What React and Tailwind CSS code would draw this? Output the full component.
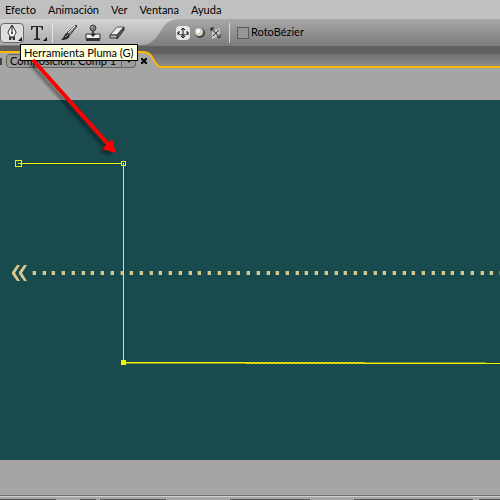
const MENU_ITEMS = ["Efecto", "Animación", "Ver", "Ventana", "Ayuda"];

// widths and gaps of the timeline header cells peeking in at the bottom
const TIMELINE_CELLS = [
  { x: 0, w: 56 },
  { x: 80, w: 16 },
  { x: 100, w: 66 },
  { x: 230, w: 80 },
  { x: 354, w: 119 },
  { x: 479, w: 2000 },
];

function MenuBar() {
  return (
    <nav className="flex h-[19px] items-center gap-3 bg-[#c0c0c0] px-[5px]">
      {MENU_ITEMS.map((item) => (
        <button key={item} type="button" className="leading-4">
          {item}
        </button>
      ))}
    </nav>
  );
}

function ToolButton({ label, active, children }) {
  return (
    <button
      type="button"
      aria-label={label}
      className={
        active
          ? "flex h-5 w-6 items-center justify-center rounded border border-[#6a6a6a] bg-[#dedede]"
          : "flex h-5 w-6 items-center justify-center"
      }
    >
      {children}
    </button>
  );
}

function PenIcon() {
  return (
    <svg width="22" height="18" viewBox="0 0 22 18">
      <path
        d="M11 1 L7 8 C7 10 9 11 9 13 H13 C13 11 15 10 15 8 Z"
        fill="#fff"
        stroke="#222"
      />
      <path d="M11 2 V8" stroke="#111" />
      <circle cx="11" cy="9" r="1" fill="#111" />
      <path d="M8 13 H14 V16 H8 Z" fill="#333" />
      <path d="M10 14 H12 V16 H10 Z" fill="#aaa" />
      <path d="M21 13 V17 H17 Z" fill="#111" />
    </svg>
  );
}

function TypeIcon() {
  return (
    <svg width="20" height="18" viewBox="0 0 20 18">
      <path
        d="M4 2 H16 V6 H15 L14 3 H11 V14 L13 15 V16 H7 V15 L9 14 V3 H6 L5 6 H4 Z"
        fill="#2a2a2a"
      />
      <path d="M20 13 V17 H16 Z" fill="#111" />
    </svg>
  );
}

function BrushIcon() {
  return (
    <svg width="18" height="18" viewBox="0 0 18 18">
      <path d="M16 1 L17 2 L10 11 L7 9 Z" fill="#8a8a8a" stroke="#333" />
      <path d="M15 2 L8 9" stroke="#eee" />
      <path d="M7 9 L10 12 C8 15 6 16 1 16 C4 14 4 10 7 9 Z" fill="#222" />
      <path d="M5 13 L8 11" stroke="#aaa" />
    </svg>
  );
}

function StampIcon() {
  return (
    <svg width="18" height="18" viewBox="0 0 18 18">
      <circle cx="9" cy="4" r="3" fill="#777" stroke="#444" />
      <path d="M8 7 H10 V11 H8 Z" fill="#444" />
      <path d="M2 10 H16 V15 H2 Z" fill="#eee" stroke="#333" />
      <path d="M6 10 H12 L9 13 Z" fill="#333" />
      <path d="M2 14 H16 V17 H2 Z" fill="#333" />
      <path d="M7 3 H9" stroke="#ccc" />
    </svg>
  );
}

function EraserIcon() {
  return (
    <svg width="18" height="18" viewBox="0 0 18 18">
      <path d="M9 3 H16 L9 11 H2 Z" fill="#eee" stroke="#555" />
      <path d="M9 11 L16 3 V6 L9 15 Z" fill="#555" stroke="#333" />
      <path d="M2 11 H9 V14 H2 Z" fill="#bbb" stroke="#333" />
    </svg>
  );
}

function AnchorIcon() {
  return (
    <svg width="12" height="12" viewBox="0 0 12 12" fill="none" stroke="#111">
      <path d="M6 1 V11 M1 6 C3 8 4 8 6 8 C8 8 9 8 11 6" />
      <path d="M4 3 L6 1 L8 3 M1 8 V5 H3 M11 8 V5 H9 M4 9 L6 11 L8 9" />
    </svg>
  );
}

function SphereIcon() {
  return (
    <svg width="12" height="12" viewBox="0 0 12 12">
      <circle cx="6" cy="6" r="5" fill="#444" />
      <circle cx="5" cy="5" r="4" fill="#d6d6c8" />
      <circle cx="4" cy="4" r="2" fill="#fff" />
    </svg>
  );
}

function AxisIcon() {
  return (
    <svg width="12" height="12" viewBox="0 0 12 12">
      <path d="M2 4 L10 1 V9 L2 12 Z" fill="#c4c4c4" />
      <path d="M1 1 L10 11 M1 4 V1 H4" fill="none" stroke="#111" />
      <path d="M3 9 L9 3 M7 10 H10 V7" fill="none" stroke="#333" />
    </svg>
  );
}

function Toolbar() {
  return (
    <div className="relative h-[27px] bg-linear-to-b from-[#a8a8a8] to-[#7c7c7c]">
      {/* light plate behind the main tools */}
      <svg className="absolute left-0 top-0" width="180" height="27">
        <defs>
          <linearGradient id="plate" x1="0" y1="0" x2="0" y2="1">
            <stop offset="0" stopColor="#d4d4d4" />
            <stop offset="1" stopColor="#a8a8a8" />
          </linearGradient>
        </defs>
        <path
          d="M0 0 H178 C164 1 164 9 158 16 C153 23 148 26 140 26 H0 Z"
          fill="url(#plate)"
        />
      </svg>
      <div className="relative flex h-[27px] items-center">
        <div className="flex items-center gap-px">
          <ToolButton label="Herramienta Pluma" active>
            <PenIcon />
          </ToolButton>
          <ToolButton label="Texto">
            <TypeIcon />
          </ToolButton>
        </div>
        <div className="ml-[3px] h-5 w-px bg-[#e4e4e4]" />
        <div className="ml-1 flex items-center">
          <ToolButton label="Pincel">
            <BrushIcon />
          </ToolButton>
          <ToolButton label="Tampón de clonar">
            <StampIcon />
          </ToolButton>
          <ToolButton label="Borrador">
            <EraserIcon />
          </ToolButton>
        </div>
        <div className="ml-[47px] flex items-center gap-1">
          <button
            type="button"
            aria-label="Eje local"
            className="flex size-[14px] items-center justify-center rounded-sm bg-[#e8e8e8]"
          >
            <AnchorIcon />
          </button>
          <button type="button" aria-label="Eje mundial">
            <SphereIcon />
          </button>
          <button type="button" aria-label="Eje de vista">
            <AxisIcon />
          </button>
        </div>
        <div className="ml-[7px] h-5 w-px bg-[#d8d8d8]" />
        <label className="ml-[7px] flex items-center gap-0.5">
          <input
            type="checkbox"
            className="size-3 appearance-none border border-[#5c5c5c] bg-[#969696]"
          />
          RotoBézier
        </label>
      </div>
    </div>
  );
}

function PanelTabs() {
  return (
    <div className="relative h-[54px] bg-[#a5a5a5]">
      <div className="h-2 bg-[#606060]" />
      <div className="h-3 bg-linear-to-b from-[#707070] to-[#8c8c8c]" />
      <div className="h-0.5 bg-[#ffb800]" />
      {/* raised tab outline */}
      <svg className="absolute left-0 top-0" width="164" height="24">
        <path
          d="M0 6 H143 C155 6 153 21 161 21 V24 H0 Z"
          fill="#a5a5a5"
        />
        <path
          d="M0 6 H143 C155 6 153 21 161 21 H164"
          fill="none"
          stroke="#ffb800"
          strokeWidth="2"
        />
      </svg>
      <div className="absolute left-0 top-2 flex items-center">
        <span className="mr-1 h-[7px] w-0.5 bg-[#444]" />
        <select
          aria-label="Composición"
          className="h-[14px] w-[116px] appearance-none rounded-l-sm border border-[#666] bg-[#9c9c9c] px-[3px] leading-3"
        >
          <option>Composición: Comp 1</option>
        </select>
        <span className="flex h-[14px] w-[14px] items-center justify-center rounded-r-sm border border-l-0 border-[#666] bg-[#9c9c9c]">
          <svg width="6" height="4">
            <path d="M0 0 H6 L3 4 Z" fill="#111" />
          </svg>
        </span>
        <button type="button" aria-label="Cerrar" className="ml-[5px]">
          <svg width="6" height="6">
            <path d="M0 0 L6 6 M6 0 L0 6" stroke="#000" strokeWidth="2" />
          </svg>
        </button>
      </div>
    </div>
  );
}

function Composition() {
  return (
    <div className="h-[360px] bg-[#184a4e]">
      <svg className="h-full w-full" shapeRendering="crispEdges">
        <g fill="#d8c88c" shapeRendering="geometricPrecision">
          <path d="M17 165 H20 L15 173 L20 181 H17 L12 174 V172 Z" />
          <path d="M24 165 H27 L22 173 L27 181 H24 L19 174 V172 Z" />
        </g>
        <line
          x1="32"
          y1="173"
          x2="100%"
          y2="173"
          stroke="#d8c88c"
          strokeOpacity="0.35"
          strokeWidth="4"
          strokeDasharray="4 5.73"
        />
        <line
          x1="33"
          y1="173"
          x2="100%"
          y2="173"
          stroke="#d8c88c"
          strokeWidth="4"
          strokeDasharray="3 6.73"
        />
        {/* mask path */}
        <g fill="#f0f000">
          <rect x="18" y="63" width="103" height="1" />
          <rect x="123" y="63" width="1" height="198" />
          <rect x="126" y="262" width="119" height="1" />
          <rect x="126" y="263" width="119" height="1" fill="#8c9c20" />
          <rect x="245" y="262" width="120" height="2" fill="#c4bc20" />
          <rect x="365" y="262" width="121" height="1" fill="#7c9428" />
          <rect x="365" y="263" width="100%" height="1" />
          <rect x="121" y="260" width="5" height="5" />
        </g>
        <path
          d="M245 262.5 H365 M247 263.5 H365"
          stroke="#f0f000"
          strokeDasharray="2 2"
        />
        <g fill="none" stroke="#f0f000">
          <rect x="15.5" y="60.5" width="6" height="6" />
          <rect x="121.5" y="61.5" width="4" height="4" />
        </g>
      </svg>
    </div>
  );
}

function TimelineEdge() {
  return (
    <div className="h-10 bg-[#a5a5a5] pt-[35px]">
      <div className="h-px bg-[#707070]" />
      <div className="h-px bg-[#d0d0d0]" />
      <svg className="h-[3px] w-full">
        {TIMELINE_CELLS.map((cell) => (
          <rect
            key={cell.x}
            x={cell.x}
            y="2"
            width={cell.w}
            height="1"
            fill="#585858"
          />
        ))}
      </svg>
    </div>
  );
}

function PointerArrow() {
  return (
    <svg
      className="pointer-events-none absolute left-0 top-0"
      width="130"
      height="170"
    >
      <defs>
        <filter id="soft" x="-20%" y="-20%" width="140%" height="140%">
          <feGaussianBlur stdDeviation="1.5" />
        </filter>
      </defs>
      <g opacity="0.4" filter="url(#soft)" transform="translate(-3 3)">
        <path d="M33 60 L108 144" stroke="#000" strokeWidth="4" />
        <path d="M115 152 L103 149 L111 139 Z" />
      </g>
      <path d="M33 60 L108 144" stroke="#f00" strokeWidth="4" />
      <path d="M116 153 L102 149 L112 139 Z" fill="#f00" />
    </svg>
  );
}

export default function App() {
  return (
    <div className="relative overflow-hidden bg-[#a5a5a5] font-[Lato,'Liberation_Sans',sans-serif] text-[11px] text-black">
      <MenuBar />
      <Toolbar />
      <PanelTabs />
      <Composition />
      <TimelineEdge />
      <div
        role="tooltip"
        className="absolute left-5 top-11 border border-black bg-[#ffffe1] px-[3px] leading-[15px]"
      >
        Herramienta Pluma (G)
      </div>
      <PointerArrow />
    </div>
  );
}
